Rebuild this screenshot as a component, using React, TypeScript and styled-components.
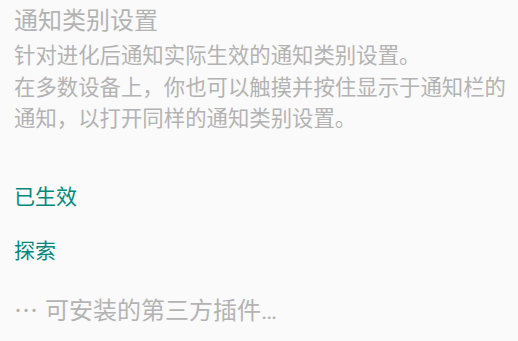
import styled, { createGlobalStyle } from "styled-components"

const GlobalStyle = createGlobalStyle`
    html, body {
        margin: 0;
        padding: 0;
        background-color: #fafafa;
    }
    body {
        font-family: "Roboto", "Noto Sans CJK SC", sans-serif;
    }
`

const Screen = styled.div`
    width: 518px;
    height: 341px;
    overflow: hidden;
    background-color: #fafafa;
    display: flex;
    flex-direction: column;
    padding: 5px 6px 0 14px;
    box-sizing: border-box;
`

const InfoBlock = styled.div`
    display: flex;
    flex-direction: column;
    gap: 3px;
`

const InfoTitle = styled.div`
    font-size: 24px;
    line-height: 32px;
    color: #b3b3b3;
`

const InfoSummary = styled.div`
    font-size: 21.4px;
    line-height: 31.5px;
    color: #b3b3b3;
`

const CategoryHeader = styled.div<{ $gap: number }>`
    margin-top: ${props => props.$gap}px;
    font-size: 21px;
    line-height: 30px;
    color: #00897b;
`

const PluginRow = styled.div`
    margin-top: 27px;
    font-size: 24px;
    line-height: 32px;
    color: #b3b3b3;
    display: flex;
    align-items: baseline;
    gap: 7px;
`

const Dots = styled.span`
    font-family: "Noto Sans CJK SC", sans-serif;
`

const App = () => {
    return (
        <>
            <GlobalStyle />
            <Screen>
                <InfoBlock>
                    <InfoTitle>通知类别设置</InfoTitle>
                    <InfoSummary>
                        针对进化后通知实际生效的通知类别设置。<br />
                        在多数设备上，你也可以触摸并按住显示于通知栏的通知，以打开同样的通知类别设置。
                    </InfoSummary>
                </InfoBlock>
                <CategoryHeader $gap={47}>已生效</CategoryHeader>
                <CategoryHeader $gap={24}>探索</CategoryHeader>
                <PluginRow>
                    <Dots>⋯</Dots>
                    <span>可安装的第三方插件…</span>
                </PluginRow>
            </Screen>
        </>
    )
}

export default App
